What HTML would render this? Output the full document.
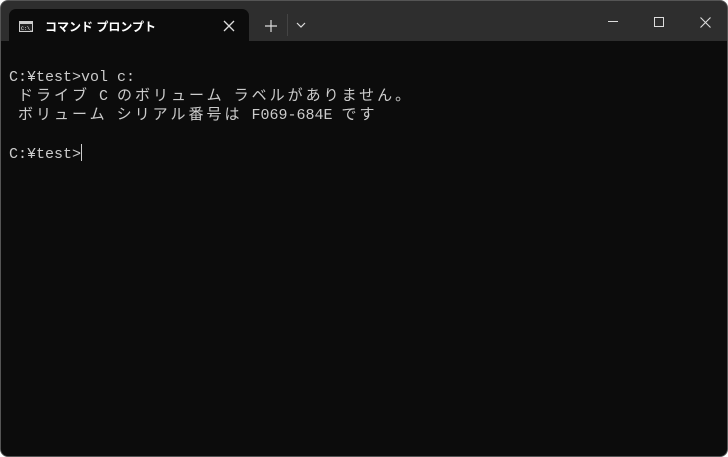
<!DOCTYPE html>
<html><head><meta charset="utf-8"><style>
*{margin:0;padding:0;box-sizing:border-box}
body{width:728px;height:457px;background:#fff;overflow:hidden;position:relative}
.win{position:absolute;left:0;top:0;width:728px;height:457px;background:#2e2e2e;border-radius:8px;overflow:hidden;border:1px solid #555}
.term{position:absolute;left:0;top:40px;width:728px;height:417px;background:#0c0c0c}
.tab{position:absolute;left:8px;top:8px;width:240px;height:33px;background:#0c0c0c;border-radius:7px 7px 0 0}
.tt{position:absolute;left:44px;top:17px;color:#fff;font:bold 12px "Liberation Sans","Noto Sans CJK JP",sans-serif}
.txt{position:absolute;left:8px;top:67px;color:#cccccc;font:15px/19px "Liberation Mono","Noto Sans CJK JP",monospace;white-space:pre}
.j{letter-spacing:3px}
</style></head><body>
<div class="win">
<div class="tab"></div>
<div class="term"></div>
<svg style="position:absolute;left:18px;top:20px" width="14" height="11"><rect x="0.5" y="0.5" width="13" height="10" fill="#222" stroke="#ccc"/><rect x="1" y="1" width="12" height="2" fill="#ccc"/><text x="2" y="9" font-size="5" fill="#fff" font-family="Liberation Mono">C:\_</text></svg>
<div class="tt">コマンド プロンプト</div>
<svg style="position:absolute;left:222px;top:19px" width="12" height="12"><path d="M1 1L11 11M11 1L1 11" stroke="#ddd" stroke-width="1.3"/></svg>
<svg style="position:absolute;left:264px;top:19px" width="12" height="12"><path d="M6 0V12M0 6H12" stroke="#ddd" stroke-width="1.2"/></svg>
<div style="position:absolute;left:286px;top:13px;width:1px;height:22px;background:#444"></div>
<svg style="position:absolute;left:295px;top:21px" width="10" height="6"><path d="M1 1L5 5L9 1" stroke="#ddd" stroke-width="1.2" fill="none"/></svg>
<div style="position:absolute;left:607px;top:20px;width:10px;height:1px;background:#ddd"></div>
<div style="position:absolute;left:653px;top:16px;width:10px;height:10px;border:1px solid #ddd"></div>
<svg style="position:absolute;left:699px;top:16px" width="11" height="11"><path d="M0.5 0.5L10.5 10.5M10.5 0.5L0.5 10.5" stroke="#ddd" stroke-width="1.1"/></svg>
<div class="txt">C:¥test&gt;vol c:
 <span class="j">ドライブ</span> C <span class="j">のボリューム</span> <span class="j">ラベルがありません。</span>
 <span class="j">ボリューム</span> <span class="j">シリアル番号は</span> F069-684E <span class="j">です</span>

C:¥test&gt;<span style="display:inline-block;width:1px;height:17px;background:#ccc;vertical-align:-3px"></span></div>
</div>
</body></html>
